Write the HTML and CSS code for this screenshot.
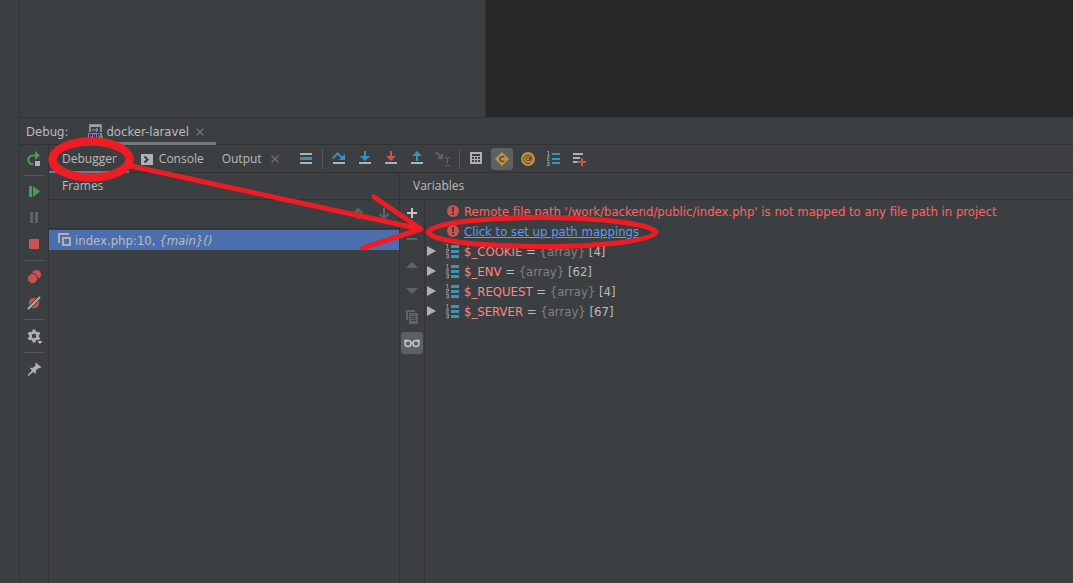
FILE: index.html
```
<!DOCTYPE html>
<html lang="en">
<head>
    <meta charset="UTF-8">
    <title>Debug: docker-laravel</title>
    <link rel="stylesheet" href="styles.css">
</head>
<body>
    <svg class="sprite" aria-hidden="true">
        <symbol id="i-close" viewBox="0 0 16 16"><path d="M4.500 4.500l7 7M11.500 4.500l-7 7" stroke="#6e7072" stroke-width="1.200"/></symbol>
        <symbol id="i-array" viewBox="0 0 16 16">
            <path d="M6 2h8v3H6zM6 7h8v3H6zM6 12h8v3H6z" fill="#3d94b5"/>
            <path d="M1 1.500h1.500V4.500M1.500 5h2M1 6.500h2.500V8H1.500v2H4M1 11.500h2.500v3.500H1M1.500 13.200h2" fill="none" stroke="#8f9193" stroke-width=".9"/>
        </symbol>
        <symbol id="i-error" viewBox="0 0 16 16">
            <circle cx="8" cy="8" r="6" fill="#c75450"/>
            <path d="M7 4h2v5H7zM7 10h2v2H7z" fill="#3c3f41"/>
        </symbol>
    </svg>

    <div class="editor">
        <div class="stripe"></div>
        <div class="project"></div>
        <div class="code"></div>
    </div>

    <div class="tool-window">
        <div class="stripe"></div>
        <div class="debug">
            <div class="title-bar">
                <span class="title">Debug:</span>
                <div class="session">
                    <svg width="16" height="16" viewBox="0 0 16 16">
                        <path d="M3 8V1h11v7" fill="none" stroke="#9aa7b0" stroke-width="1.500"/>
                        <path d="M3 1h11v2H3z" fill="#9aa7b0"/>
                        <path d="M5 6h6M9 4l2 2-2 2" fill="none" stroke="#9aa7b0"/>
                        <path d="M1 9h14v6H1z" fill="#a177c4"/>
                        <path d="M2.500 14v-4h2v2h-2M6.500 10v4M8.500 10v4M6.500 12h2M10.500 14v-4h2v2h-2" fill="none" stroke="#332b3a"/>
                        <circle cx="14" cy="13" r="2" fill="#0bd30b"/>
                    </svg>
                    <span>docker-laravel</span>
                    <button class="close" aria-label="Close session"><svg width="16" height="16"><use href="#i-close"/></svg></button>
                </div>
            </div>

            <div class="debug-body">
                <div class="side-bar">
                    <button aria-label="Rerun"><svg width="16" height="16" viewBox="0 0 16 16">
                        <path d="M7.500 13.200C4.500 13.500 2.300 11.500 2.300 9s2-4.500 4.700-4.500h3" fill="none" stroke="#499c54" stroke-width="2"/>
                        <path d="M9 0l5 4.500L9 9z" fill="#499c54"/><path d="M9 10h5v5H9z" fill="#afb1b3"/></svg></button>
                    <hr>
                    <button aria-label="Resume"><svg width="16" height="16" viewBox="0 0 16 16"><path d="M3 2h3v11H3zM7 2l7 5.500L7 13z" fill="#499c54"/></svg></button>
                    <button aria-label="Pause" disabled><svg width="16" height="16" viewBox="0 0 16 16"><path d="M4 2h3v11H4zM9 2h3v11H9z" fill="#606365"/></svg></button>
                    <button aria-label="Stop"><svg width="16" height="16" viewBox="0 0 16 16"><path d="M3 3h10v10H3z" fill="#c75450"/></svg></button>
                    <hr>
                    <button aria-label="View breakpoints"><svg width="16" height="16" viewBox="0 0 16 16">
                        <circle cx="10.500" cy="5.500" r="4.500" fill="#c75450"/>
                        <circle cx="6.500" cy="9.500" r="5" fill="#c75450" stroke="#3c3f41"/></svg></button>
                    <button aria-label="Mute breakpoints"><svg width="16" height="16" viewBox="0 0 16 16">
                        <circle cx="8" cy="8" r="5.200" fill="#c75450"/>
                        <path d="M2 14L14 2" stroke="#3c3f41" stroke-width="3.600"/><path d="M2 14L14 2" stroke="#afb1b3" stroke-width="1.800"/></svg></button>
                    <hr>
                    <button aria-label="Settings"><svg width="18" height="18" viewBox="0 0 18 18">
                        <circle cx="9" cy="9" r="3.600" fill="none" stroke="#afb1b3" stroke-width="2.600"/>
                        <path d="M9 2.500v2.500M9 13v2.500M3.400 5.800l2 1.200M12.600 11l2 1.200M3.400 12.200l2-1.200M12.600 7l2-1.200" stroke="#afb1b3" stroke-width="3"/>
                        <path d="M12 14h6l-3 3z" fill="#d0d2d4" stroke="#3c3f41" stroke-width=".5"/></svg></button>
                    <hr>
                    <button aria-label="Pin tab"><svg width="16" height="16" viewBox="0 0 16 16">
                        <path d="M9.500 1l6 5.500-1.500.5-2 .500-2 2-.5 3.500-2.500-2-4.500 4-.9-.7 4.200-4.800-2-2.500 3.700-.5 2-2z" fill="#afb1b3"/></svg></button>
                </div>

                <div class="content">
                    <div class="tab-bar">
                        <button class="tab active">Debugger</button>
                        <button class="tab console">
                            <svg width="12" height="12" viewBox="0 0 12 12"><path d="M0 1h12v11H0z" fill="#afb1b3"/><path d="M3.500 3.500l3 3-3 3" fill="none" stroke="#3c3f41" stroke-width="2"/></svg>
                            Console</button>
                        <button class="tab output">Output</button>
                        <button class="close" aria-label="Close output"><svg width="16" height="16"><use href="#i-close"/></svg></button>
                        <div class="actions">
                            <button aria-label="Show execution point"><svg width="16" height="16" viewBox="0 0 16 16"><path d="M2 2h12v2H2zM2 11h12v2H2z" fill="#afb1b3"/><path d="M2 6h12v3H2z" fill="#3592c4"/></svg></button>
                            <span class="split"></span>
                            <button aria-label="Step over"><svg width="16" height="16" viewBox="0 0 16 16"><path d="M2 11h12v2H2z" fill="#afb1b3"/><path d="M1.500 7.500L6.500 2.500l5 4.500" fill="none" stroke="#3592c4" stroke-width="2"/><path d="M14 3v6H8z" fill="#3592c4"/></svg></button>
                            <button aria-label="Step into"><svg width="16" height="16" viewBox="0 0 16 16"><path d="M2 11h12v2H2z" fill="#afb1b3"/><path d="M7 0h2v5h4l-5 5-5-5h4z" fill="#3592c4"/></svg></button>
                            <button aria-label="Force step into"><svg width="16" height="16" viewBox="0 0 16 16"><path d="M2 11h12v2H2z" fill="#afb1b3"/><path d="M7 0h2v5h4l-5 5-5-5h4z" fill="#c75450"/></svg></button>
                            <button aria-label="Step out"><svg width="16" height="16" viewBox="0 0 16 16"><path d="M2 11h12v2H2z" fill="#afb1b3"/><path d="M7 10h2V5h4L8 0 3 5h4z" fill="#3592c4"/></svg></button>
                            <button aria-label="Run to cursor" disabled><svg width="16" height="16" viewBox="0 0 16 16"><path d="M1 1l6 6" stroke="#606365" stroke-width="2"/><path d="M8 2v6H2z" fill="#606365"/><path d="M10 6.500h2l.500.5.500-.5h2M12.500 7v6M10 14.500h2l.500-.5.500.5h2" fill="none" stroke="#606365"/></svg></button>
                            <span class="split"></span>
                            <button aria-label="Evaluate expression"><svg width="16" height="16" viewBox="0 0 16 16"><path d="M2 1h12v12H2z" fill="#afb1b3"/><path d="M4 3h8v2H4zM4 6h2v2H4zM7 6h2v2H7zM10 6h2v2h-2zM4 9h2v2H4zM7 9h2v2H7zM10 9h2v2h-2z" fill="#3c3f41"/></svg></button>
                            <button class="on" aria-label="Show constants"><svg width="16" height="16" viewBox="0 0 16 16"><path d="M8 1l7 7-7 7-7-7z" fill="#be9045"/><path d="M10.200 6.200a2.500 2.500 0 1 0 0 3.600" fill="none" stroke="#54412a" stroke-width="1.300"/></svg></button>
                            <button aria-label="Show superglobals"><svg width="16" height="16" viewBox="0 0 16 16"><circle cx="8" cy="8" r="7" fill="#be9045"/><path d="M10.500 11.500A4.200 4.200 0 1 1 12 8c0 2-1.800 2-1.800.7V6" fill="none" stroke="#54412a"/><circle cx="8" cy="8" r="1.900" fill="none" stroke="#54412a"/></svg></button>
                            <button aria-label="Show values"><svg width="16" height="16" viewBox="0 0 16 16">
                                <path d="M6 2h8v2H6zM6 7h8v2H6zM6 11h8v2H6z" fill="#3592c4"/>
                                <path d="M1 .5h1.500V4M1.500 4.500h2M1 6h2v1.500H1.500v2h2M1 11.500h2v3H1M1.500 13h1.500" fill="none" stroke="#8f9193"/></svg></button>
                            <button aria-label="Add to watches"><svg width="16" height="16" viewBox="0 0 16 16"><path d="M1 2h10v2H1zM1 6h8v2H1zM1 10h5v2H1z" fill="#afb1b3"/><path d="M10 6v9M5.500 11h9" stroke="#3c3f41" stroke-width="4"/><path d="M10 7v8M6 11h8" stroke="#c75450" stroke-width="2"/></svg></button>
                        </div>
                    </div>

                    <div class="panes">
                        <section class="frames">
                            <h2>Frames</h2>
                            <div class="frame-nav">
                                <button aria-label="Previous frame" disabled><svg width="16" height="16" viewBox="0 0 16 16"><path d="M8 14V4M3.500 8.500L8 4l4.500 4.500" fill="none" stroke="#606365" stroke-width="2"/></svg></button>
                                <button aria-label="Next frame" disabled><svg width="16" height="16" viewBox="0 0 16 16"><path d="M8 3v10M3.500 9L8 13.500 12.500 9" fill="none" stroke="#606365" stroke-width="2"/></svg></button>
                            </div>
                            <div class="frame">
                                <svg width="14" height="14" viewBox="0 0 14 14"><path d="M1 10V1h10" fill="none" stroke="#afb1b3" stroke-width="2"/><path d="M5 5h7v7H5z" fill="none" stroke="#afb1b3" stroke-width="2"/></svg>
                                <span>index.php:10, <i>{main}()</i></span>
                            </div>
                        </section>

                        <section class="variables">
                            <h2>Variables</h2>
                            <div class="watch">
                                <div class="watch-bar">
                                    <button aria-label="New watch"><svg width="16" height="16" viewBox="0 0 16 16"><path d="M8 3v10M3 8h10" stroke="#c5c7c9" stroke-width="2"/></svg></button>
                                    <button aria-label="Remove watch" disabled><svg width="16" height="16" viewBox="0 0 16 16"><path d="M3 8h10" stroke="#606365" stroke-width="2"/></svg></button>
                                    <button aria-label="Move up" disabled><svg width="16" height="16" viewBox="0 0 16 16"><path d="M2 11h12L8 5z" fill="#606365"/></svg></button>
                                    <button aria-label="Move down" disabled><svg width="16" height="16" viewBox="0 0 16 16"><path d="M2 5h12l-6 6z" fill="#606365"/></svg></button>
                                    <button aria-label="Duplicate" disabled><svg width="16" height="16" viewBox="0 0 16 16"><path d="M3 11V2h8" fill="none" stroke="#606365" stroke-width="2"/><path d="M5 4h9v11H5z" fill="#606365"/><path d="M7 7.500h5M7 9.500h5M7 11.500h5" stroke="#3c3f41"/></svg></button>
                                    <button class="on" aria-label="Show watches"><svg width="18" height="16" viewBox="0 0 18 16"><circle cx="5" cy="8.500" r="3" fill="none" stroke="#c5c7c9" stroke-width="1.500"/><circle cx="13" cy="8.500" r="3" fill="none" stroke="#c5c7c9" stroke-width="1.500"/><path d="M1 5.500h4M13 5.500h4M8 8h2" stroke="#c5c7c9" stroke-width="1.300"/></svg></button>
                                </div>
                                <ul class="tree">
                                    <li><span class="arrow"></span><svg width="16" height="16"><use href="#i-error"/></svg><span class="error">Remote file path '/work/backend/public/index.php' is not mapped to any file path in project</span></li>
                                    <li><span class="arrow"></span><svg width="16" height="16"><use href="#i-error"/></svg><a href="#">Click to set up path mappings</a></li>
                                    <li><span class="arrow open"></span><svg width="16" height="16"><use href="#i-array"/></svg><span><b>$_COOKIE</b> = <em>{array}</em> [4]</span></li>
                                    <li><span class="arrow open"></span><svg width="16" height="16"><use href="#i-array"/></svg><span><b>$_ENV</b> = <em>{array}</em> [62]</span></li>
                                    <li><span class="arrow open"></span><svg width="16" height="16"><use href="#i-array"/></svg><span><b>$_REQUEST</b> = <em>{array}</em> [4]</span></li>
                                    <li><span class="arrow open"></span><svg width="16" height="16"><use href="#i-array"/></svg><span><b>$_SERVER</b> = <em>{array}</em> [67]</span></li>
                                </ul>
                            </div>
                        </section>
                    </div>
                </div>
            </div>
        </div>
    </div>

    <!-- red marker -->
    <svg class="marker" width="700" height="300" fill="none" stroke="#ee1c24" stroke-width="5" stroke-linecap="round" stroke-linejoin="round" aria-hidden="true">
        <ellipse cx="91" cy="159.500" rx="38.500" ry="18" stroke-width="8.500"/>
        <path d="M131 166L420 229M374 197L421 229L363 248"/>
        <path d="M428 232C434 223 480 218 542 217.500C605 218 650 224 656 232C652 240 610 246.500 542 246.500C474 246 433 241 428 232Z"/>
    </svg>
</body>
</html>
```
FILE: styles.css
```
* {
    box-sizing: border-box;
}
body {
    margin: 0;
    height: 100vh;
    display: flex;
    flex-direction: column;
    overflow: hidden;
    background-color: #3c3f41;
    color: #bbbbbb;
    font-family: "DejaVu Sans Condensed", "DejaVu Sans", sans-serif;
    font-size: 13px;
}
button {
    display: flex;
    align-items: center;
    justify-content: center;
    width: 22px;
    height: 22px;
    margin: 2px;
    padding: 0;
    border: 0;
    border-radius: 3px;
    background: none;
    color: inherit;
    font: inherit;
}
button.on {
    background-color: #5c6164;
}
svg {
    display: block;
    flex: none;
}
.sprite {
    position: absolute;
    width: 0;
    height: 0;
}

.editor {
    display: flex;
    height: 118px;
    flex: none;
}
.stripe {
    width: 20px;
    flex: none;
    border-right: 1px solid #323232;
}
.project {
    width: 466px;
    border-right: 1px solid #323232;
    border-bottom: 1px solid #323232;
}
.code {
    flex: 1;
    background-color: #282828;
    border-bottom: 1px solid #323232;
}

.tool-window {
    display: flex;
    flex: 1;
    min-height: 0;
}
.debug {
    flex: 1;
    min-width: 0;
    display: flex;
    flex-direction: column;
}
.title-bar {
    display: flex;
    height: 27px;
    padding-left: 6px;
    gap: 12px;
    border-bottom: 1px solid #323232;
}
.title {
    line-height: 27px;
}
.session {
    display: flex;
    align-items: center;
    gap: 3px;
    height: 27px;
    padding: 3px 8px 0 7px;
    border-bottom: 3px solid #747a80;
}
.close {
    width: 16px;
    margin: 0;
}

.debug-body {
    display: flex;
    flex: 1;
    min-height: 0;
}
.side-bar {
    display: flex;
    flex-direction: column;
    width: 29px;
    padding: 1px;
    border-right: 1px solid #323232;
}
.side-bar hr {
    width: 20px;
    margin: 3px;
    border: 0;
    border-top: 1px solid #555758;
}
.content {
    flex: 1;
    min-width: 0;
    display: flex;
    flex-direction: column;
}

.tab-bar {
    display: flex;
    align-items: center;
    height: 28px;
    border-bottom: 1px solid #323232;
    font-family: "Open Sans", "Noto Sans", sans-serif;
    font-size: 12px;
}
.tab {
    width: auto;
    height: 28px;
    margin: 0;
    padding: 0 12px;
    gap: 6px;
    border-radius: 0;
}
.tab.active {
    border-bottom: 2px solid #747a80;
    padding: 2px 12px 0 13px;
}
.tab.output {
    padding: 0 5px 0 6px;
}
.actions {
    display: flex;
    align-items: center;
    padding-left: 10px;
}
.split {
    width: 1px;
    height: 20px;
    margin: 0 3px;
    background-color: #555758;
}

.panes {
    display: flex;
    flex: 1;
    min-height: 0;
}
h2 {
    margin: 0;
    height: 27px;
    padding-left: 13px;
    border-bottom: 1px solid #323232;
    font: 12px/26px "Open Sans", "Noto Sans", sans-serif;
}
.frames {
    width: 351px;
    border-right: 1px solid #323232;
}
.frame-nav {
    display: flex;
    justify-content: flex-end;
    height: 29px;
    padding-right: 2px;
    border-bottom: 1px solid #323232;
}
.frame {
    display: flex;
    align-items: center;
    gap: 3px;
    height: 20px;
    margin-top: 1px;
    padding-left: 9px;
    background-color: #4b6eaf;
}
.variables {
    flex: 1;
    min-width: 0;
    display: flex;
    flex-direction: column;
}
.watch {
    display: flex;
    flex: 1;
}
.watch-bar {
    width: 25px;
    flex: none;
    border-right: 1px solid #323232;
}
.watch-bar button {
    margin: 0 1px 4px;
}
.watch-bar button:first-child {
    margin-top: 2px;
}
.tree {
    margin: 0;
    padding: 1px 2px;
    list-style: none;
    white-space: nowrap;
}
.tree li {
    display: flex;
    align-items: center;
    height: 20px;
}
.tree svg {
    margin: 0 3px 0 9px;
}
.arrow {
    width: 9px;
    height: 10px;
}
.arrow.open {
    background-color: #afb1b3;
    clip-path: polygon(0 0, 100% 50%, 0 100%);
}
.tree b {
    color: #ff8785;
    font-weight: normal;
}
.tree em {
    color: #7f8182;
    font-style: normal;
}
.error {
    color: #ff6464;
}
.tree a {
    color: #589df6;
}

.marker {
    position: absolute;
    top: 0;
    left: 0;
    pointer-events: none;
}
```
